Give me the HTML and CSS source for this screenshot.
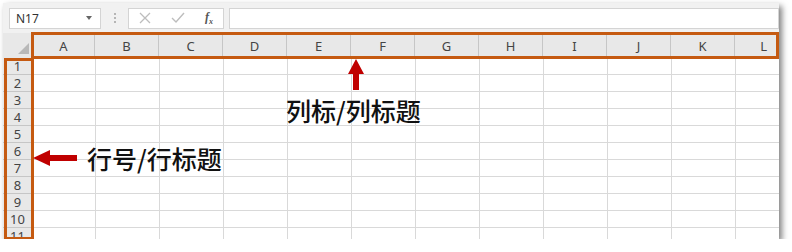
FILE: index.html
```html
<!DOCTYPE html>
<html lang="zh-CN">
<head>
    <meta charset="UTF-8">
    <title>行号与列标</title>
    <link rel="stylesheet" href="styles.css">
</head>
<body>
    <div class="sheet">
        <div class="toolbar">
            <div class="namebox">
                <span>N17</span>
                <span class="caret"></span>
            </div>
            <div class="grip"><i></i><i></i><i></i></div>
            <div class="fxbox">
                <svg width="12" height="12" viewBox="0 0 12 12"><path d="M1 1 L11 11 M11 1 L1 11" stroke="#bdbdbd" stroke-width="1.3" fill="none"/></svg>
                <svg width="14" height="12" viewBox="0 0 14 12"><path d="M1 6 L5 10 L13 1" stroke="#bdbdbd" stroke-width="1.4" fill="none"/></svg>
                <span class="fx">f<sub>x</sub></span>
            </div>
            <div class="formula"></div>
        </div>

        <div class="grid">
            <div class="corner"><span class="selall"></span></div>
            <div class="colheads">
                <div>A</div><div>B</div><div>C</div><div>D</div>
                <div>E</div><div>F</div><div>G</div><div>H</div>
                <div>I</div><div>J</div><div>K</div><div>L</div>
            </div>
            <div class="rowheads">
                <div>1</div><div>2</div><div>3</div><div>4</div>
                <div>5</div><div>6</div><div>7</div><div>8</div>
                <div>9</div><div>10</div><div>11</div>
            </div>
            <div class="cells"></div>
        </div>

        <!-- annotations -->
        <div class="mark mark-cols"></div>
        <div class="mark mark-rows"></div>

        <svg class="arrow arrow-up" width="16" height="31" viewBox="0 0 16 31">
            <polygon points="8,0 16,15 11,15 11,31 5,31 5,15 0,15" fill="#c00000"/>
        </svg>
        <div class="label label-cols">列标/列标题</div>

        <svg class="arrow arrow-left" width="44" height="16" viewBox="0 0 44 16">
            <polygon points="0,8 17,0 17,5 44,5 44,11 17,11 17,16" fill="#c00000"/>
        </svg>
        <div class="label label-rows">行号/行标题</div>
    </div>
</body>
</html>
```

FILE: styles.css
```css
:root {
    --toolbar: #f1f1f1;
    --head: #e8e8e8;
    --head-line: #c6c6c6;
    --grid-line: #d9d9d9;
    --box-line: #d4d4d4;
    --orange: #c55a11;
    --red: #c00000;
}

body {
    margin: 0;
    background: #ffffff;
    font-family: 'Noto Sans', 'Liberation Sans', sans-serif;
}

.sheet {
    position: relative;
    margin: 3px 0 0 3px;
    width: 776px;
    height: 236px;
    background: var(--toolbar);
    box-shadow: 3px 3px 6px rgba(0, 0, 0, 0.5);
}

.toolbar {
    height: 30px;
    display: flex;
    align-items: center;
    padding: 0 0 0 6px;
    box-sizing: border-box;
}

.namebox,
.fxbox,
.formula {
    height: 21px;
    background: #ffffff;
    border: 1px solid var(--box-line);
    box-sizing: border-box;
    display: flex;
    align-items: center;
}

.namebox {
    width: 92px;
    padding: 0 6px 0 6px;
    justify-content: space-between;
    font-size: 12px;
    color: #333;
}

.caret {
    width: 0;
    height: 0;
    border-left: 3px solid transparent;
    border-right: 3px solid transparent;
    border-top: 4px solid #666;
    margin-right: 2px;
}

.grip {
    width: 27px;
    display: flex;
    flex-direction: column;
    align-items: center;
    gap: 2px;
}

.grip i {
    width: 2px;
    height: 2px;
    background: #b5b5b5;
}

.fxbox {
    width: 96px;
    padding: 0 10px 0 10px;
    justify-content: space-between;
}

.fx {
    font-family: 'Liberation Serif', serif;
    font-style: italic;
    font-size: 12px;
    color: #555;
    font-weight: bold;
}

.fx sub {
    font-size: 8px;
}

.formula {
    flex: 1;
    margin-left: 5px;
}

.grid {
    display: grid;
    grid-template-columns: 30px 1fr;
    grid-template-rows: 25px 1fr;
    height: 206px;
    background: #ffffff;
}

.corner {
    background: var(--head);
    position: relative;
    border-right: 1px solid var(--head-line);
}

.selall {
    position: absolute;
    right: 3px;
    bottom: 4px;
    width: 0;
    height: 0;
    border-left: 11px solid transparent;
    border-bottom: 11px solid #b8b8b8;
}

.colheads {
    display: grid;
    grid-template-columns: 62px repeat(10, 64px) 1fr;
    background: var(--head);
    border-bottom: 1px solid var(--head-line);
}

.colheads div {
    border-right: 1px solid var(--head-line);
    display: flex;
    align-items: flex-end;
    justify-content: center;
    padding-bottom: 2px;
    font-size: 13px;
    color: #444;
}

.colheads div:last-child {
    border-right: none;
    justify-content: flex-end;
    padding-right: 12px;
}

.rowheads {
    background: var(--head);
    border-right: 1px solid var(--head-line);
    overflow: hidden;
}

.rowheads div {
    height: 17px;
    box-sizing: border-box;
    border-bottom: 1px solid var(--head-line);
    text-align: center;
    font-size: 13px;
    line-height: 17px;
    color: #444;
}

.cells {
    background-image:
        linear-gradient(to right, var(--grid-line) 1px, transparent 1px),
        linear-gradient(to bottom, var(--grid-line) 1px, transparent 1px);
    background-size: 64px 100%, 100% 17px;
    background-position: 62px 0, 0 16px;
}

.mark {
    position: absolute;
    border: 3px solid var(--orange);
    box-sizing: border-box;
}

.mark-cols {
    left: 28px;
    top: 29px;
    width: 748px;
    height: 27px;
}

.mark-rows {
    left: 1px;
    top: 55px;
    width: 30px;
    height: 182px;
}

.arrow {
    position: absolute;
}

.arrow-up {
    left: 345px;
    top: 56px;
}

.arrow-left {
    left: 30px;
    top: 147px;
}

.label {
    position: absolute;
    font-family: 'Noto Sans CJK SC', sans-serif;
    font-size: 25px;
    line-height: 30px;
    color: #111;
    font-weight: 500;
}

.label-cols {
    left: 283px;
    top: 92px;
}

.label-rows {
    left: 84px;
    top: 140px;
}
```
